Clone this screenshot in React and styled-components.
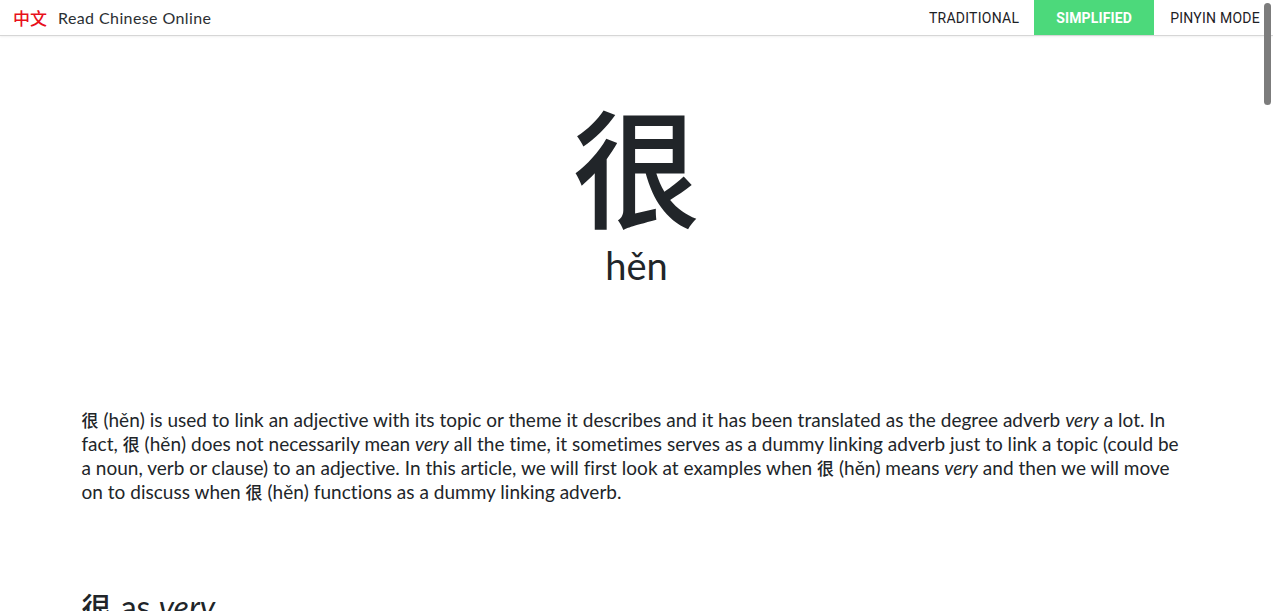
import React from "react";
import styled, { createGlobalStyle } from "styled-components";

const Global = createGlobalStyle`
  html, body { margin: 0; padding: 0; overflow: hidden; background: #fff; }
  body {
    font-family: "Lato", "Noto Sans CJK SC", sans-serif;
    color: #212529;
  }
  * { box-sizing: border-box; }
`;

const Nav = styled.header`
  height: 36px;
  display: flex;
  align-items: stretch;
  justify-content: space-between;
  border-bottom: 1px solid #d6d6d6;
  box-shadow: 0 1px 2px rgba(0,0,0,0.06);
  background: #fff;
`;

const Brand = styled.div`
  display: flex;
  align-items: center;
  padding-left: 13px;
  gap: 11px;
`;

const BrandMark = styled.span`
  color: #e8101a;
  font-family: "Noto Sans CJK SC", sans-serif;
  font-size: 17px;
  font-weight: 500;
`;

const BrandName = styled.span`
  font-size: 16px;
  letter-spacing: 0.4px;
  color: #2b2f33;
`;

const Menu = styled.nav`
  display: flex;
  align-items: stretch;
  padding-right: 13px;
`;

const MenuItem = styled.a`
  display: flex;
  align-items: center;
  padding: 1px ${(p) => (p.$last ? "0" : "15px")} 0 ${(p) => (p.$first ? "0" : "16px")};
  font-family: "Roboto", sans-serif;
  font-size: 14px;
  letter-spacing: 0.25px;
  text-transform: uppercase;
  color: ${(p) => (p.$active ? "#fff" : "#1d2125")};
  background: ${(p) => (p.$active ? "#4cd97b" : "transparent")};
  font-weight: ${(p) => (p.$active ? 700 : 400)};
  text-decoration: none;
  ${(p) => p.$active && "padding-left: 22px; padding-right: 22px; letter-spacing: 0.15px;"}
`;

const Hero = styled.section`
  display: flex;
  flex-direction: column;
  align-items: center;
  padding-top: 50px;
`;

const BigChar = styled.div`
  font-family: "Noto Sans CJK SC", sans-serif;
  font-size: 128px;
  line-height: 1;
  font-weight: 500;
  color: #212529;
  height: 156px;
  display: flex;
  align-items: center;
`;

const Pinyin = styled.div`
  font-size: 38px;
  line-height: 1;
  margin-top: 4px;
  color: #212529;
`;

const Container = styled.main`
  width: 1140px;
  margin: 0 auto;
  padding: 0 15px;
`;

const Para = styled.p`
  margin: 124px 0 0;
  font-size: 19px;
  line-height: 24px;
  letter-spacing: 0.02px;
  color: #212529;
`;

const Zh = styled.span`
  font-family: "Noto Sans CJK SC", sans-serif;
  font-size: 17px;
  font-weight: 500;
  letter-spacing: 0;
`;

const Heading = styled.h2`
  margin: 84px 0 0;
  font-size: 32px;
  font-weight: 400;
  line-height: 1.2;
`;

const HeadZh = styled.span`
  font-family: "Noto Sans CJK SC", sans-serif;
  font-size: 30px;
  font-weight: 500;
  margin-right: 1px;
`;

const ScrollThumb = styled.div`
  position: fixed;
  right: 2px;
  top: 3px;
  width: 7px;
  height: 102px;
  border-radius: 4px;
  background: #7c7c7c;
`;

export default function App() {
  return (
    <>
      <Global />
      <Nav>
        <Brand>
          <BrandMark>中文</BrandMark>
          <BrandName>Read Chinese Online</BrandName>
        </Brand>
        <Menu>
          <MenuItem $first>Traditional</MenuItem>
          <MenuItem $active>Simplified</MenuItem>
          <MenuItem $last>Pinyin Mode</MenuItem>
        </Menu>
      </Nav>
      <Hero>
        <BigChar>很</BigChar>
        <Pinyin>hěn</Pinyin>
      </Hero>
      <Container>
        <Para>
          <Zh>很</Zh> (hěn) is used to link an adjective with its topic or theme it describes and it has been
          translated as the degree adverb <em>very</em> a lot. In fact, <Zh>很</Zh> (hěn) does not necessarily
          mean <em>very</em> all the time, it sometimes serves as a dummy linking adverb just to link a topic
          (could be a noun, verb or clause) to an adjective. In this article, we will first look at examples
          when <Zh>很</Zh> (hěn) means <em>very</em> and then we will move on to discuss when <Zh>很</Zh> (hěn)
          functions as a dummy linking adverb.
        </Para>
        <Heading>
          <HeadZh>很</HeadZh> as <em>very</em>
        </Heading>
      </Container>
      <ScrollThumb />
    </>
  );
}
